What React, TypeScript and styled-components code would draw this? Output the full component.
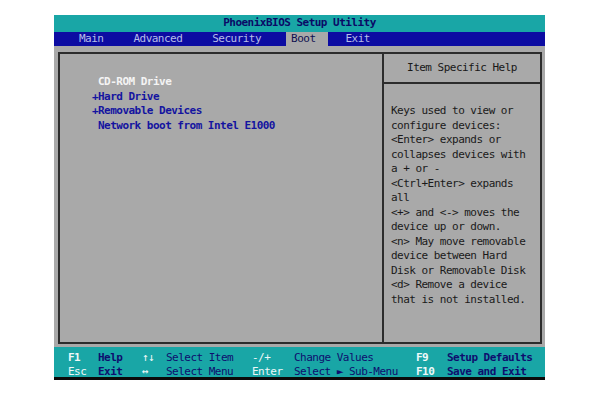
import React from "react";
import styled, { createGlobalStyle } from "styled-components";

const Global = createGlobalStyle`
  html, body { margin: 0; padding: 0; background: #ffffff; }
  body { font-family: "DejaVu Sans Mono", "Liberation Mono", monospace; }
`;

const Screen = styled.div`
  width: 491px;
  margin: 15px 0 0 54px;
  font-family: "DejaVu Sans Mono", "Liberation Mono", monospace;
  font-size: 11px;
  letter-spacing: -0.52px;
  line-height: 14.5px;
`;

const TitleBar = styled.div`
  height: 17px;
  background: #19a6a6;
  display: flex;
  align-items: center;
  justify-content: center;
  color: #0a0a66;
  font-weight: bold;
`;

const MenuBar = styled.div`
  height: 14px;
  background: #0c0ca2;
  display: flex;
  align-items: stretch;
  padding-left: 20px;
  gap: 13px;
`;

const Tab = styled.div<{ $active?: boolean }>`
  padding: 0 12px 0 5px;
  display: flex;
  align-items: center;
  background: ${(p) => (p.$active ? "#a9a9a9" : "transparent")};
  color: ${(p) => (p.$active ? "#101050" : "#b6bde8")};
`;

const Body = styled.div`
  background: #a9a9a9;
  height: 301px;
  box-sizing: border-box;
  padding: 6px 3px 3px 4px;
`;

const Frame = styled.div`
  height: 100%;
  box-sizing: border-box;
  border: 2px solid #2c2c2c;
  display: grid;
  grid-template-columns: 322px 156px;
  column-gap: 2px;
  background: #2c2c2c;
`;

const LeftPanel = styled.div`
  background: #a9a9a9;
  padding: 21px 0 0 32px;
`;

const BootItem = styled.div<{ $current?: boolean }>`
  display: flex;
  font-weight: bold;
  color: ${(p) => (p.$current ? "#f4f4f4" : "#1414a0")};
  white-space: pre;
`;

const Prefix = styled.span`
  width: 6px;
  display: inline-block;
`;

const RightPanel = styled.div`
  display: grid;
  grid-template-rows: 28px 1fr;
  row-gap: 2px;
`;

const HelpTitle = styled.div`
  background: #a9a9a9;
  color: #181818;
  display: flex;
  align-items: center;
  justify-content: center;
`;

const HelpBody = styled.div`
  background: #a9a9a9;
  color: #1a1a1a;
  padding: 20px 0 0 7px;
  white-space: pre;
`;

const Footer = styled.div`
  background: #19a6a6;
  height: 33px;
  box-sizing: border-box;
  padding: 4px 0 0 14px;
  border-bottom: 3px solid #0a0a0a;
  display: grid;
  grid-template-columns: 30px 44px 24px 86px 42px 122px 31px 1fr;
  grid-auto-rows: 14px;
  align-items: center;
  white-space: pre;
`;

const Key = styled.span<{ $bold?: boolean }>`
  color: #eef8f8;
  font-weight: ${(p) => (p.$bold ? "bold" : "normal")};
`;

const Desc = styled.span<{ $bold?: boolean }>`
  color: #0e0e6e;
  font-weight: ${(p) => (p.$bold ? "bold" : "normal")};
`;

const tabs = ["Main", "Advanced", "Security", "Boot", "Exit"];

const items: { prefix: string; label: string; current?: boolean }[] = [
  { prefix: " ", label: "CD-ROM Drive", current: true },
  { prefix: "+", label: "Hard Drive" },
  { prefix: "+", label: "Removable Devices" },
  { prefix: " ", label: "Network boot from Intel E1000" },
];

const helpLines = [
  "Keys used to view or",
  "configure devices:",
  "<Enter> expands or",
  "collapses devices with",
  "a + or -",
  "<Ctrl+Enter> expands",
  "all",
  "<+> and <-> moves the",
  "device up or down.",
  "<n> May move removable",
  "device between Hard",
  "Disk or Removable Disk",
  "<d> Remove a device",
  "that is not installed.",
];

const footer: [string, string, boolean?][] = [
  ["F1", "Help", true],
  ["↑↓", "Select Item"],
  ["-/+", "Change Values"],
  ["F9", "Setup Defaults", true],
  ["Esc", "Exit", true],
  ["↔", "Select Menu"],
  ["Enter", "Select ► Sub-Menu"],
  ["F10", "Save and Exit", true],
];

export default function App() {
  return (
    <>
      <Global />
      <Screen>
        <TitleBar>PhoenixBIOS Setup Utility</TitleBar>
        <MenuBar>
          {tabs.map((t) => (
            <Tab key={t} $active={t === "Boot"}>
              {t}
            </Tab>
          ))}
        </MenuBar>
        <Body>
          <Frame>
            <LeftPanel>
              {items.map((it) => (
                <BootItem key={it.label} $current={it.current}>
                  <Prefix>{it.prefix.trim()}</Prefix>
                  {it.label}
                </BootItem>
              ))}
            </LeftPanel>
            <RightPanel>
              <HelpTitle>Item Specific Help</HelpTitle>
              <HelpBody>
                {helpLines.map((l, i) => (
                  <div key={i}>{l}</div>
                ))}
              </HelpBody>
            </RightPanel>
          </Frame>
        </Body>
        <Footer>
          {footer.map(([k, d, b]) => (
            <React.Fragment key={k}>
              <Key $bold={k.startsWith("F")}>{k}</Key>
              <Desc $bold={b}>{d}</Desc>
            </React.Fragment>
          ))}
        </Footer>
      </Screen>
    </>
  );
}
